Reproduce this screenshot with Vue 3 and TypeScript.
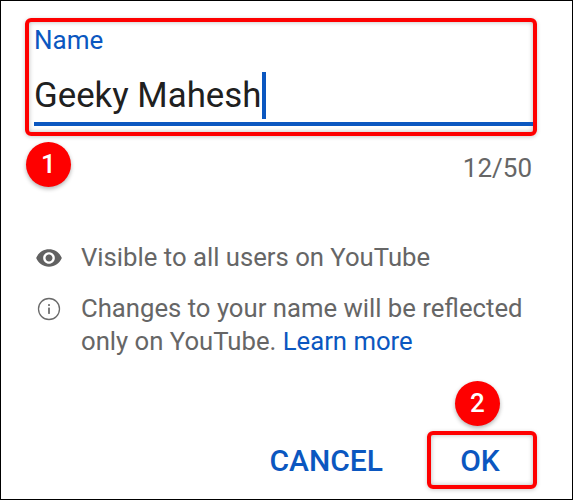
<template>
  <div class="dialog">
    <div class="field-box">
      <div class="field-label">Name</div>
      <div class="field-value">
        <span>{{ name }}</span><span class="caret"></span>
      </div>
      <div class="field-line"></div>
      <div class="badge badge-one">1</div>
    </div>
    <div class="counter">{{ name.length }}/50</div>

    <div class="note note-first">
      <svg class="note-icon" viewBox="0 0 24 24">
        <path
          fill="#616161"
          d="M12 4.5C7 4.5 2.73 7.61 1 12c1.73 4.39 6 7.5 11 7.5s9.27-3.11 11-7.5c-1.73-4.39-6-7.5-11-7.5zM12 17c-2.76 0-5-2.24-5-5s2.24-5 5-5 5 2.24 5 5-2.24 5-5 5zm0-8c-1.66 0-3 1.34-3 3s1.34 3 3 3 3-1.34 3-3-1.34-3-3-3z"
        />
      </svg>
      <div>Visible to all users on YouTube</div>
    </div>
    <div class="note">
      <svg class="note-icon" viewBox="0 0 24 24">
        <circle cx="12" cy="12" r="9" fill="none" stroke="#6a6a6a" stroke-width="1.1" />
        <rect x="11.3" y="10.8" width="1.4" height="5.4" fill="#616161" />
        <rect x="11.3" y="7.8" width="1.4" height="1.6" fill="#616161" />
      </svg>
      <div>
        Changes to your name will be reflected<br />
        only on YouTube. <span class="link">Learn more</span>
      </div>
    </div>

    <div class="actions">
      <button class="action cancel">CANCEL</button>
      <button class="action ok">
        OK
        <span class="badge badge-two">2</span>
      </button>
    </div>
  </div>
</template>

<script setup lang="ts">
const name = "Geeky Mahesh";
</script>

<style>
html,
body {
  margin: 0;
  background: #fff;
}
</style>

<style scoped>
.dialog {
  box-sizing: border-box;
  width: 573px;
  height: 500px;
  border: 1px solid #000;
  background: #fff;
  font-family: Roboto, "Liberation Sans", sans-serif;
  color: #666;
  display: flex;
  flex-direction: column;
}

.field-box {
  position: relative;
  box-sizing: border-box;
  height: 118px;
  margin: 17px 35px 0 24px;
  padding: 0 0 0 5px;
  border: 4px solid #fe0000;
  border-radius: 6px;
  box-shadow: inset 0 0 5px rgba(0, 0, 0, 0.28), 0 1px 4px rgba(0, 0, 0, 0.2);
}

.field-label {
  margin-top: 1px;
  font-size: 26px;
  line-height: 34px;
  color: #0b57c0;
}

.field-value {
  box-sizing: border-box;
  display: flex;
  align-items: center;
  height: 65px;
  padding-top: 11px;
  font-size: 34.8px;
  color: #202020;
}

.caret {
  width: 4px;
  height: 47px;
  margin-left: 1px;
  background: #0b57c0;
}

.field-line {
  height: 4px;
  background: #0b57c0;
}

.badge {
  position: absolute;
  width: 45px;
  height: 45px;
  border-radius: 50%;
  background: #fe0000;
  color: #fff;
  font-size: 26px;
  font-weight: 500;
  line-height: 45px;
  text-align: center;
  box-shadow: 0 2px 4px rgba(0, 0, 0, 0.3);
}

.badge-one {
  left: -3px;
  top: 120px;
}

.badge-two {
  left: 24px;
  top: -54px;
}

.counter {
  margin: 17px 40px 0 0;
  font-size: 26px;
  line-height: 30px;
  text-align: right;
}

.note {
  display: flex;
  align-items: flex-start;
  gap: 18px;
  margin: 18px 0 0 34px;
  font-size: 25.7px;
  line-height: 33px;
}

.note-first {
  margin-top: 58px;
}

.note-icon {
  flex: none;
  width: 28px;
  height: 28px;
  margin-top: 3px;
}

.link {
  color: #0b57c0;
}

.actions {
  display: flex;
  justify-content: flex-end;
  align-items: center;
  margin: auto 35px 10px 0;
}

.action {
  border: 0;
  background: none;
  padding: 0;
  font: inherit;
  font-size: 30px;
  font-weight: 500;
  color: #0b57c0;
}

.cancel {
  margin-right: 44px;
}

.ok {
  position: relative;
  box-sizing: border-box;
  width: 110px;
  height: 58px;
  padding-right: 4px;
  border: 4px solid #fe0000;
  border-radius: 6px;
  box-shadow: inset 0 0 5px rgba(0, 0, 0, 0.28), 0 1px 4px rgba(0, 0, 0, 0.2);
}
</style>
